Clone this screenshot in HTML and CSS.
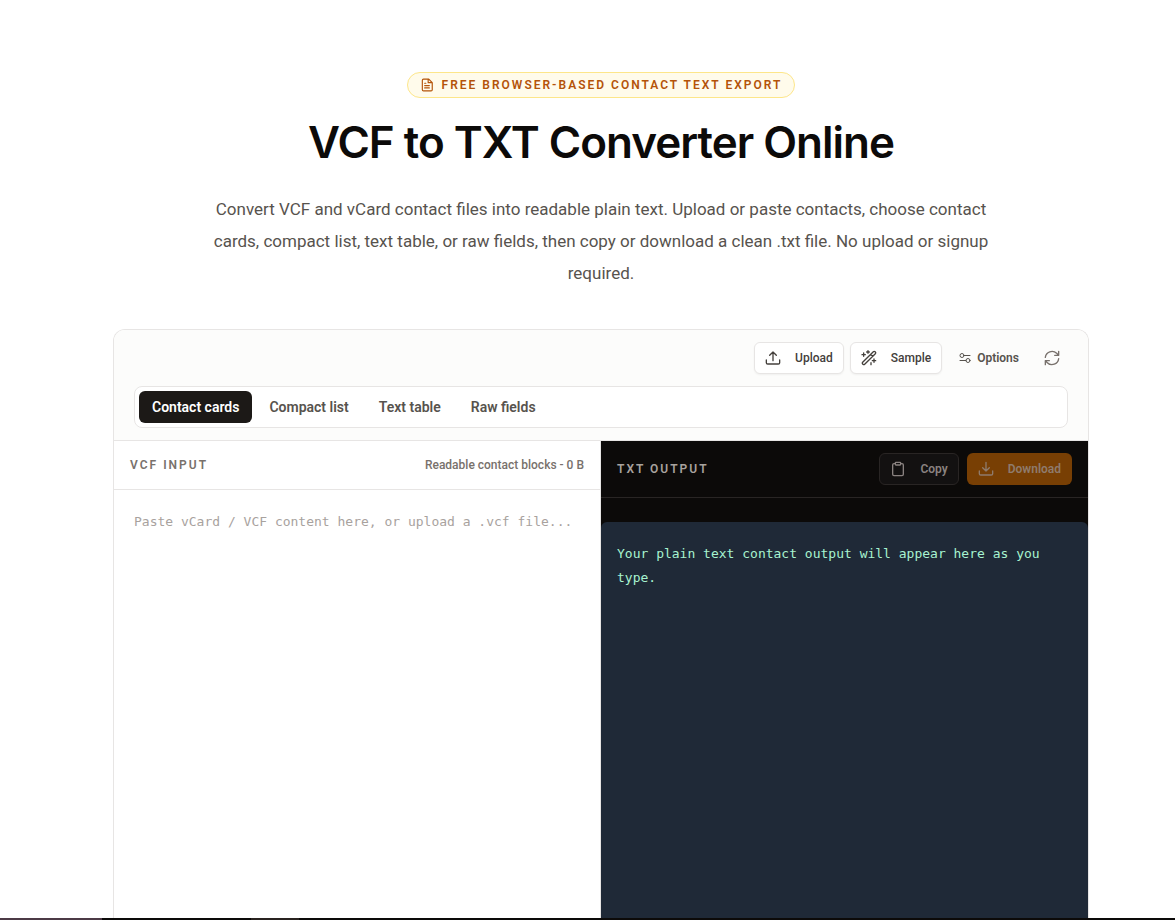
FILE: index.html
```html
<!DOCTYPE html>
<html lang="en">
<head>
<meta charset="utf-8">
<meta name="viewport" content="width=device-width, initial-scale=1">
<title>VCF to TXT Converter Online</title>
<link rel="stylesheet" href="styles.css">
</head>
<body>
<main class="page">
  <header class="hero">
    <p class="badge">
      <svg class="icon-badge" viewBox="0 0 24 24" aria-hidden="true"><path d="M6 2h9l6 6v12a2 2 0 0 1-2 2H6a2 2 0 0 1-2-2V4a2 2 0 0 1 2-2zM14 2v6h6M8 9h2M8 13h8M8 17h8"/></svg>
      Free browser-based contact text export
    </p>
    <h1 class="title">VCF to TXT Converter Online</h1>
    <p class="lead">Convert VCF and vCard contact files into readable plain text. Upload or paste contacts, choose contact cards, compact list, text table, or raw fields, then copy or download a clean .txt file. No upload or signup required.</p>
  </header>

  <section class="tool">
    <div class="toolbar">
      <div class="actions">
        <button class="btn btn-light" type="button">
          <svg class="icon" viewBox="0 0 24 24" aria-hidden="true"><path d="M12 16V3M7 8l5-5 5 5M2 15v4a2 2 0 0 0 2 2h16a2 2 0 0 0 2-2v-4"/></svg>
          Upload
        </button>
        <button class="btn btn-light" type="button">
          <svg class="icon" viewBox="0 0 24 24" aria-hidden="true"><path d="M2.500 18.500 18.500 2.500a1.800 1.800 0 0 1 2.600 0l.4.4a1.800 1.800 0 0 1 0 2.600l-16 16a1.800 1.800 0 0 1-2.600 0l-.4-.4a1.800 1.800 0 0 1 0-2.600zM14.500 6.500l3 3M4 4.500v5M1.500 7h5M10.500 1v4M8.500 3h4M19.500 13.500v5M17 16h5M15 19v3"/></svg>
          Sample
        </button>
        <button class="btn btn-ghost" type="button">
          <svg class="icon-small" viewBox="0 0 24 24" aria-hidden="true"><circle cx="6" cy="7" r="4"/><path d="M10 7h12M2 17h12"/><circle cx="18" cy="17" r="4"/></svg>
          Options
        </button>
        <button class="btn btn-icon" type="button" aria-label="Reset">
          <svg class="icon" viewBox="0 0 24 24" aria-hidden="true"><path d="M2 11a10 10 0 0 1 17-6l3 3M22 2v6h-6M22 13a10 10 0 0 1-17 6l-3-3M2 22v-6h6"/></svg>
        </button>
      </div>
      <div class="tabs" role="tablist">
        <button class="tab tab-active" type="button" role="tab" aria-selected="true">Contact cards</button>
        <button class="tab" type="button" role="tab" aria-selected="false">Compact list</button>
        <button class="tab" type="button" role="tab" aria-selected="false">Text table</button>
        <button class="tab" type="button" role="tab" aria-selected="false">Raw fields</button>
      </div>
    </div>

    <div class="panes">
      <div class="pane pane-input">
        <div class="input-head">
          <label class="label" for="vcf">VCF input</label>
          <span class="status">Readable contact blocks - 0 B</span>
        </div>
        <textarea class="editor" id="vcf" spellcheck="false" placeholder="Paste vCard / VCF content here, or upload a .vcf file..."></textarea>
      </div>
      <div class="pane pane-output">
        <div class="output-head">
          <h2 class="label label-output">TXT output</h2>
          <div class="output-actions">
            <button class="btn btn-copy" type="button" disabled>
              <svg class="icon" viewBox="0 0 24 24" aria-hidden="true"><path d="M8 4H6a2 2 0 0 0-2 2v14a2 2 0 0 0 2 2h12a2 2 0 0 0 2-2V6a2 2 0 0 0-2-2h-2M9 2h6a1 1 0 0 1 1 1v2a1 1 0 0 1-1 1H9a1 1 0 0 1-1-1V3a1 1 0 0 1 1-1z"/></svg>
              Copy
            </button>
            <button class="btn btn-download" type="button" disabled>
              <svg class="icon" viewBox="0 0 24 24" aria-hidden="true"><path d="M12 2v13M7 10l5 5 5-5M2 15v4a2 2 0 0 0 2 2h16a2 2 0 0 0 2-2v-4"/></svg>
              Download
            </button>
          </div>
        </div>
        <pre class="result">Your plain text contact output will appear here as you type.</pre>
      </div>
    </div>
  </section>
</main>
<div class="strip"><span class="strip-start"></span><span class="strip-mark"></span></div>
</body>
</html>
```
FILE: styles.css
```css
* {
  box-sizing: border-box;
}

body {
  display: flex;
  flex-direction: column;
  min-height: 100vh;
  margin: 0;
  background: #fff;
  color: #0c0a09;
  font-family: Roboto, "Liberation Sans", sans-serif;
}

button {
  font: inherit;
}

svg {
  flex: none;
  fill: none;
  stroke: currentColor;
  stroke-width: 2;
  stroke-linecap: round;
  stroke-linejoin: round;
}

.page {
  display: flex;
  flex: 1;
  flex-direction: column;
  align-items: center;
  padding: 72px 0 0 27px;
}

.hero {
  display: flex;
  flex-direction: column;
  align-items: center;
  text-align: center;
}

.badge {
  display: flex;
  align-items: center;
  gap: 8px;
  margin: 0;
  padding: 0 12px;
  border: 1px solid #fde68a;
  border-radius: 13px;
  background: #fffbeb;
  color: #b45309;
  font-size: 12px;
  font-weight: 600;
  line-height: 24px;
  letter-spacing: 2px;
  text-transform: uppercase;
}

.icon-badge {
  width: 14px;
  height: 14px;
}

.title {
  margin: 18px 0 24px;
  font-family: Inter, sans-serif;
  font-size: 44px;
  font-weight: 600;
  line-height: 53px;
  letter-spacing: -1px;
}

.lead {
  max-width: 800px;
  margin: 0;
  color: #57534e;
  font-size: 17px;
  line-height: 32px;
}

.tool {
  display: flex;
  flex: 1;
  flex-direction: column;
  width: 100%;
  max-width: 976px;
  margin-top: 40px;
  overflow: hidden;
  border: 1px solid #e7e5e4;
  border-bottom: 0;
  border-radius: 12px 12px 0 0;
}

.toolbar {
  display: flex;
  flex-direction: column;
  gap: 12px;
  padding: 12px 20px;
  border-bottom: 1px solid #e7e5e4;
  background: #fcfcfb;
}

.actions {
  display: flex;
  justify-content: flex-end;
  gap: 6px;
}

.btn {
  display: flex;
  align-items: center;
  gap: 14px;
  height: 32px;
  padding: 0 10px;
  border: 1px solid transparent;
  border-radius: 6px;
  background: transparent;
  color: #44403c;
  font-size: 12px;
  font-weight: 500;
}

.icon {
  width: 16px;
  height: 16px;
}

.icon-small {
  width: 12px;
  height: 12px;
}

.btn-light {
  border-color: #e7e5e4;
  background: #fff;
  box-shadow: 0 1px 2px #0000000d;
}

.btn-ghost {
  gap: 6px;
  color: #57534e;
  font-weight: 600;
}

.btn-icon {
  justify-content: center;
  width: 32px;
  padding: 0;
  color: #78716c;
}

.tabs {
  display: flex;
  gap: 4px;
  padding: 4px;
  border: 1px solid #e7e5e4;
  border-radius: 8px;
  background: #fff;
}

.tab {
  height: 32px;
  padding: 0 13px;
  border: 0;
  border-radius: 6px;
  background: transparent;
  color: #57534e;
  font-size: 14px;
  font-weight: 600;
}

.tab-active {
  background: #1c1917;
  color: #fff;
}

.panes {
  display: grid;
  flex: 1;
  grid-template-columns: 1fr 1fr;
}

.pane {
  display: flex;
  flex-direction: column;
  min-width: 0;
}

.pane-input {
  border-right: 1px solid #e7e5e4;
}

.input-head,
.output-head {
  display: flex;
  align-items: center;
  justify-content: space-between;
  padding: 12px 16px;
  border-bottom: 1px solid #e7e5e4;
}

.label {
  margin: 0;
  color: #78716c;
  font-size: 12px;
  font-weight: 600;
  line-height: 24px;
  letter-spacing: 2px;
  text-transform: uppercase;
}

.status {
  color: #78716c;
  font-size: 12px;
  font-weight: 500;
}

.editor {
  flex: 1;
  padding: 20px;
  border: 0;
  outline: 0;
  background: #fff;
  resize: none;
}

.editor,
.result {
  font-family: "DejaVu Sans Mono", monospace;
  font-size: 13px;
  line-height: 24px;
}

.editor::placeholder {
  color: #a8a29e;
}

.pane-output {
  background: #0c0a09;
}

.output-head {
  border-color: #292524;
}

.label-output {
  color: #a8a29e;
}

.output-actions {
  display: flex;
  gap: 8px;
}

.btn-copy,
.btn-download {
  font-weight: 600;
}

.btn-copy {
  border-color: #292524;
  background: #131111;
  color: #8a8280;
}

.btn-download {
  background: #783f04;
  color: #8f7b6c;
}

.result {
  flex: 1;
  margin: 24px 0 0;
  padding: 20px 16px;
  border-radius: 6px 6px 0 0;
  background: #1f2937;
  color: #a7f3d0;
  white-space: pre-wrap;
}

.strip {
  display: flex;
  gap: 149px;
  height: 2px;
  background: #0c0a09;
}

.strip-start {
  width: 102px;
  background: #4c3a46;
}

.strip-mark {
  width: 48px;
  background: #292320;
}
```
